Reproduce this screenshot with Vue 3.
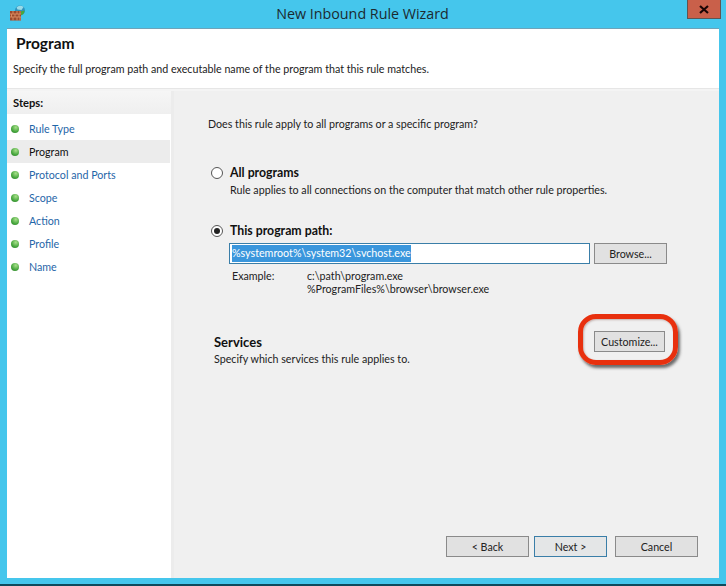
<script setup>
const steps = ['Rule Type', 'Program', 'Protocol and Ports', 'Scope', 'Action', 'Profile', 'Name']
</script>

<template>
  <div class="frame">
    <div class="titlebar">
      <svg class="appicon" width="16" height="16" viewBox="0 0 16 16">
        <circle cx="10" cy="5.500" r="5" fill="#2f93bd" />
        <path d="M6.500 2.500a5 5 0 0 1 7-.5l-2 3-4-.5z" fill="#9adbe8" />
        <path d="M10.500 6.500l4-1a5 5 0 0 1-4 5z" fill="#4aa83c" />
        <rect x="0" y="6" width="11" height="9.500" fill="#9c4a2c" />
        <path d="M0 9h11M0 12h11M3 6v3M7 6v3M10 6v3M1.500 9v3M5 9v3M9 9v3M3 12v3.500M7 12v3.500M10 12v3.500" stroke="#d88a60" stroke-width="1" fill="none" />
      </svg>
      <div class="title">New Inbound Rule Wizard</div>
      <div class="close">
        <svg width="10" height="9" viewBox="0 0 10 9"><path d="M1 1l8 7M9 1L1 8" stroke="#1a0505" stroke-width="2.200" fill="none" /></svg>
      </div>
    </div>
    <div class="client">
      <header class="head">
        <h1>Program</h1>
        <p>Specify the full program path and executable name of the program that this rule matches.</p>
      </header>
      <div class="body">
        <aside class="side">
          <div class="steps-title">Steps:</div>
          <ul>
            <li v-for="s in steps" :key="s" :class="{ active: s === 'Program' }">
              <span class="dot"></span>{{ s }}
            </li>
          </ul>
        </aside>
        <main class="main">
          <div class="question">Does this rule apply to all programs or a specific program?</div>
          <div class="option first">
            <span class="radio"></span>
            <div class="option-text">
              <div class="label">All programs</div>
              <div class="desc">Rule applies to all connections on the computer that match other rule properties.</div>
            </div>
          </div>
          <div class="option second">
            <span class="radio on"></span>
            <div class="label">This program path:</div>
          </div>
          <div class="path-row">
            <div class="input"><span class="selected">%systemroot%\system32\svchost.exe</span></div>
            <button class="btn browse">Browse...</button>
          </div>
          <div class="example">
            <span class="ex-label">Example:</span>
            <span>c:\path\program.exe<br />%ProgramFiles%\browser\browser.exe</span>
          </div>
          <div class="services">
            <div>
              <div class="label big">Services</div>
              <div class="desc">Specify which services this rule applies to.</div>
            </div>
            <div class="callout-wrap">
              <button class="btn customize">Customize...</button>
              <span class="callout"></span>
            </div>
          </div>
          <div class="footer">
            <button class="btn wide">&lt; Back</button>
            <button class="btn default">Next &gt;</button>
            <button class="btn wide cancel">Cancel</button>
          </div>
        </main>
      </div>
    </div>
  </div>
</template>

<style>
html, body { margin: 0; padding: 0; }
</style>

<style scoped>
.frame {
  width: 726px;
  height: 586px;
  box-sizing: border-box;
  background: #45c6ec;
  border-bottom: 2px solid #0e4a5c;
  padding: 0 7px 6px;
  display: flex;
  flex-direction: column;
  font-family: Lato, "Liberation Sans", sans-serif;
  font-size: 10.700px;
  color: #222;
  overflow: hidden;
}
.titlebar {
  height: 29px;
  flex: none;
  position: relative;
  display: flex;
  justify-content: center;
}
.appicon { position: absolute; left: 3px; top: 5px; }
.title {
  font-family: "Open Sans", sans-serif;
  font-size: 14.300px;
  color: #1c2a30;
  line-height: 28px;
  margin-left: -1px;
}
.close {
  position: absolute;
  right: -2px;
  top: 0;
  width: 34px;
  height: 19px;
  box-sizing: border-box;
  background: #c9604a;
  border: 1px solid #5f5552;
  border-top: 0;
  display: flex;
  align-items: center;
  justify-content: center;
}
.client {
  flex: 1;
  min-height: 0;
  display: flex;
  flex-direction: column;
  background: #fff;
  box-shadow: 0 -1px 0 #6fa3b8;
}
.head {
  height: 60px;
  flex: none;
  box-sizing: border-box;
  border-bottom: 1px solid #e6e6e6;
  padding: 6px 6px 0;
}
.head h1 {
  margin: 0 0 0 3px;
  font-size: 15.500px;
  line-height: 17px;
  font-weight: 700;
  color: #111;
}
.head p {
  margin: 9px 0 0;
  line-height: 15px;
}
.body { flex: 1; display: flex; min-height: 0; border-top: 2px solid #f4f4f4; }
.side {
  width: 164px;
  flex: none;
  border-right: 3px solid #ececec;
  background: #fff;
}
.steps-title {
  height: 23px;
  line-height: 24px;
  padding-left: 6px;
  font-size: 11.200px;
  font-weight: 700;
  color: #111;
  background: linear-gradient(#f6f6f6, #efefef);
}
.side ul { margin: 3px 0 0; padding: 0; list-style: none; }
.side li {
  height: 23px;
  line-height: 23px;
  color: #1f66a8;
  display: flex;
  align-items: center;
  padding-left: 4px;
  margin-right: 1px;
}
.side li.active { color: #111; background: #ececec; }
.dot {
  width: 8px;
  height: 8px;
  border-radius: 50%;
  background: radial-gradient(circle at 60% 30%, #a8e08a, #45a53c 60%, #2c7a2c);
  margin-right: 10px;
  flex: none;
}
.main {
  flex: 1;
  background: #f0f0f0;
  padding: 0 0 0 34px;
  display: flex;
  flex-direction: column;
  min-width: 0;
}
.question { margin-top: 25px; line-height: 15px; }
.option { display: flex; }
.option.first { margin-top: 34px; }
.option.second { margin-top: 26px; align-items: center; }
.radio {
  width: 12px;
  height: 12px;
  flex: none;
  margin: 2px 7px 0 3px;
  border: 1px solid #555;
  border-radius: 50%;
  background: #fff;
  box-sizing: border-box;
  position: relative;
}
.radio.on::after {
  content: "";
  position: absolute;
  left: 2px;
  top: 2px;
  width: 6px;
  height: 6px;
  border-radius: 50%;
  background: #222;
}
.option.second .radio { margin-top: 0; }
.label { font-size: 12.300px; font-weight: 700; line-height: 16px; color: #111; }
.label.big { font-size: 13px; }
.desc { line-height: 15px; margin-top: 1px; }
.path-row { display: flex; margin: 4px 0 0 21px; gap: 4px; }
.input {
  width: 361px;
  height: 21px;
  box-sizing: border-box;
  border: 1px solid #3a7ea8;
  background: #fff;
  padding: 1px 0 0 2px;
  line-height: 16px;
}
.selected { background: #3a96dc; color: #fff; display: inline-block; height: 17px; }
.btn {
  font: inherit;
  color: #222;
  background: #e1e1e1;
  border: 1px solid #8a8a8a;
  padding: 0;
  height: 21px;
  box-sizing: border-box;
  line-height: 18px;
}
.browse { width: 73px; }
.example { display: flex; margin: 5px 0 0 24px; line-height: 13px; }
.ex-label { width: 75px; }
.services {
  display: flex;
  justify-content: space-between;
  width: 451px;
  margin: 39px 0 0 6px;
  align-items: flex-start;
}
.callout-wrap { position: relative; margin-top: -3px; }
.customize { width: 71px; display: block; }
.callout {
  position: absolute;
  left: -16px;
  top: -17px;
  width: 100px;
  height: 51px;
  box-sizing: border-box;
  border: 5px solid #e8300e;
  border-radius: 18px;
  box-shadow: 2px 3px 3px rgba(50, 50, 50, 0.7), inset 1px 1px 2px rgba(90, 30, 20, 0.3);
  pointer-events: none;
}
.footer {
  margin-top: auto;
  margin-bottom: 21px;
  align-self: flex-end;
  display: flex;
  margin-right: 21px;
}
.wide { width: 83px; }
.default { width: 73px; margin: 0 8px 0 5px; border-color: #3a7ea8; background: #e4e6e7; }
</style>
